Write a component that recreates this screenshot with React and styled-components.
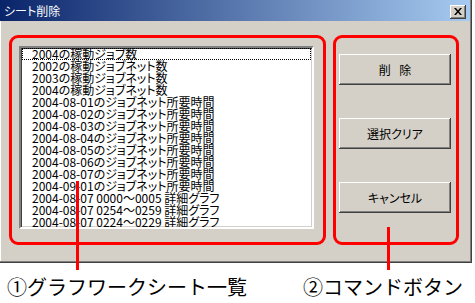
import React from "react";
import styled, { createGlobalStyle } from "styled-components";

const Global = createGlobalStyle`
  html, body { margin: 0; padding: 0; background: #ffffff; }
  body { font-family: "Noto Sans CJK JP", "Liberation Sans", sans-serif; }
`;

const Page = styled.div`
  position: relative;
  width: 475px;
  height: 303px;
  overflow: hidden;
`;

const Window = styled.div`
  width: 472px;
  height: 263px;
  box-sizing: border-box;
  background: #d4d0c8;
  display: flex;
  flex-direction: column;
  box-shadow: inset -1px -1px #404040, inset -2px -2px #808080, inset 1px 0 #ffffff;
`;

const TitleBar = styled.div`
  height: 21px;
  width: 470px;
  display: flex;
  align-items: center;
  justify-content: space-between;
  padding: 0 4px 0 4px;
  box-sizing: border-box;
  background: linear-gradient(to right, #0a246a, #a6caf0);
`;

const Title = styled.span`
  color: #ffffff;
  font-size: 12px;
  line-height: 14px;
  font-feature-settings: "palt";
`;

const CloseButton = styled.div`
  width: 16px;
  height: 14px;
  box-sizing: border-box;
  background: #d4d0c8;
  display: flex;
  align-items: center;
  justify-content: center;
  box-shadow: inset -1px -1px #404040, inset 1px 1px #ffffff, inset -2px -2px #808080;
  margin-top: 2px;
`;

const Body = styled.div`
  display: flex;
  gap: 7px;
  padding: 14px 0 0 9px;
`;

const Group = styled.div`
  box-sizing: border-box;
  width: ${(p) => p.$w}px;
  height: 210px;
  border: 3px solid #ff0000;
  border-radius: 9px;
  display: flex;
  flex-direction: column;
  padding: ${(p) => p.$pad};
  gap: ${(p) => p.$gap || 0}px;
`;

const ListBox = styled.div`
  width: 295px;
  height: 183px;
  box-sizing: border-box;
  background: #ffffff;
  border-style: solid;
  border-width: 2px;
  border-color: #808080 #ffffff #ffffff #808080;
  box-shadow: inset 1px 1px #404040, inset -1px -1px #d4d0c8;
  padding: 0 1px 0 1px;
  overflow: hidden;
`;

const Item = styled.div`
  height: 12px;
  line-height: 12px;
  font-size: 12px;
  color: #000;
  padding-left: 10px;
  white-space: nowrap;
  font-feature-settings: "palt";
  outline: ${(p) => (p.$focus ? "1px dotted #000" : "none")};
  outline-offset: -1px;
`;

const Button = styled.div`
  width: 112px;
  height: 31px;
  box-sizing: border-box;
  background: #d4d0c8;
  display: flex;
  align-items: center;
  justify-content: center;
  font-size: 12px;
  color: #000;
  font-feature-settings: "palt";
  word-spacing: ${(p) => p.$ws || 0}px;
  box-shadow: inset -1px -1px #404040, inset 1px 1px #ffffff, inset -2px -2px #808080;
  white-space: pre;
`;

const Labels = styled.div`
  display: flex;
  margin-top: 14px;
  padding-left: 7px;
`;

const Label = styled.div`
  font-size: 20px;
  line-height: 20px;
  color: #000;
  white-space: nowrap;
  width: ${(p) => p.$w || "auto"};
`;

const Callout = styled.div`
  position: absolute;
  background: #ff0000;
  width: 3px;
  left: ${(p) => p.$x}px;
  top: ${(p) => p.$y}px;
  height: ${(p) => p.$h}px;
`;

const items = [
  "2004の稼動ジョブ数",
  "2002の稼動ジョブネット数",
  "2003の稼動ジョブネット数",
  "2004の稼動ジョブネット数",
  "2004-08-01のジョブネット所要時間",
  "2004-08-02のジョブネット所要時間",
  "2004-08-03のジョブネット所要時間",
  "2004-08-04のジョブネット所要時間",
  "2004-08-05のジョブネット所要時間",
  "2004-08-06のジョブネット所要時間",
  "2004-08-07のジョブネット所要時間",
  "2004-09-01のジョブネット所要時間",
  "2004-08-07 0000～0005 詳細グラフ",
  "2004-08-07 0254～0259 詳細グラフ",
  "2004-08-07 0224～0229 詳細グラフ",
];

export default function App() {
  return (
    <Page>
      <Global />
      <Window>
        <TitleBar>
          <Title>シート削除</Title>
          <CloseButton>
            <svg width="8" height="7" viewBox="0 0 8 7">
              <path d="M0 0h2l2 2.5L6 0h2L5 3.5 8 7H6L4 4.5 2 7H0l3-3.5z" fill="#000" />
            </svg>
          </CloseButton>
        </TitleBar>
        <Body>
          <Group $w={317} $pad="8px 0 0 7px">
            <ListBox>
              {items.map((t, i) => (
                <Item key={i} $focus={i === 0}>
                  {t}
                </Item>
              ))}
            </ListBox>
          </Group>
          <Group $w={126} $pad="16px 0 0 3px" $gap={33}>
            <Button $ws={6}>{"削 除"}</Button>
            <Button>選択クリア</Button>
            <Button>キャンセル</Button>
          </Group>
        </Body>
      </Window>
      <Labels>
        <Label $w="296px">①グラフワークシート一覧</Label>
        <Label>②コマンドボタン</Label>
      </Labels>
      <Callout $x={76} $y={181} $h={89} />
      <Callout $x={387} $y={227} $h={43} />
    </Page>
  );
}
